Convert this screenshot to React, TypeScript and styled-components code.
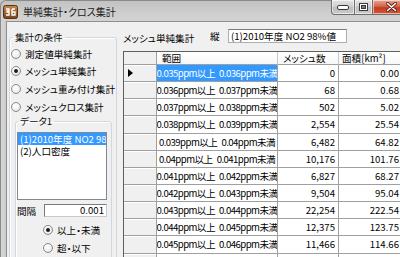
import React from 'react';
import styled, { createGlobalStyle } from 'styled-components';

const FONT = `"Noto Sans CJK JP", "Noto Sans", sans-serif`;

const Global = createGlobalStyle`
  html, body { margin: 0; padding: 0; width: 400px; height: 257px; overflow: hidden; background: #c9c9c9; }
  #root { width: 400px; height: 257px; overflow: hidden; }
  *, *::before, *::after { box-sizing: border-box; }
`;

const Window = styled.div`
  width: 416px;
  height: 290px;
  display: flex;
  flex-direction: column;
  border-top: 1px solid #8a8a8a;
  border-left: 1px solid #8a8a8a;
  border-top-left-radius: 6px;
  background: linear-gradient(180deg, #c2c2c2 0px, #d0d0d0 14px, #d6d6d6 30px, #d4d4d4 100%);
  font-family: ${FONT};
  font-feature-settings: "palt";
  color: #000;
`;

const TitleBar = styled.div`
  height: 20px;
  display: flex;
  align-items: flex-start;
  padding-left: 2px;
  padding-right: 5px;
`;

const AppIcon = styled.svg`
  margin-top: 4px;
  flex: none;
`;

const Title = styled.div`
  margin-left: 5px;
  margin-top: 4px;
  font-size: 10px;
  line-height: 14px;
  color: #1a1a1a;
  white-space: nowrap;
`;

const Caption = styled.div`
  margin-left: auto;
  display: flex;
  height: 15px;
  margin-top: -1px;
`;

const CapBtn = styled.div<{ $w: number; $close?: boolean; $first?: boolean; $last?: boolean }>`
  width: ${(p) => p.$w}px;
  height: 15px;
  display: flex;
  align-items: center;
  justify-content: center;
  border: 1px solid #6e6e6e;
  border-top: none;
  border-left: ${(p) => (p.$first ? '1px solid #6e6e6e' : 'none')};
  border-bottom-left-radius: ${(p) => (p.$first ? '4px' : '0')};
  border-bottom-right-radius: ${(p) => (p.$last ? '4px' : '0')};
  background: ${(p) =>
    p.$close
      ? 'linear-gradient(180deg, #e7a795 0%, #d6654c 45%, #c43b22 55%, #d05a3a 100%)'
      : 'linear-gradient(180deg, #e4e4e4 0%, #cfcfcf 45%, #bdbdbd 55%, #cbcbcb 100%)'};
  box-shadow: inset 0 0 0 1px rgba(255, 255, 255, 0.55);
`;

const Body = styled.div`
  flex: 1;
  display: flex;
  min-height: 0;
`;

const SideFrame = styled.div`
  width: 5px;
  flex: none;
  background: linear-gradient(90deg, #d9d9d9, #cbcbcb);
`;

const Client = styled.div`
  flex: 1;
  display: flex;
  background: #f0f0f0;
  border-top: 1px solid #8f8f8f;
  border-left: 1px solid #8f8f8f;
  overflow: hidden;
  min-width: 0;
  font-size: 9.6px;
  line-height: 12px;
`;

const LeftPanel = styled.div`
  width: 116px;
  flex: none;
  padding: 9px 0 0 2px;
`;

const Group = styled.fieldset<{ $w: number; $ml?: number }>`
  margin: 0 0 0 ${(p) => p.$ml ?? 0}px;
  padding: 0;
  width: ${(p) => p.$w}px;
  min-width: 0;
  height: 320px;
  border: 1px solid #cfd8de;
  border-radius: 3px;
  box-shadow: 1px 1px 0 #ffffff inset;
`;

const Legend = styled.legend<{ $ml: number }>`
  margin-left: ${(p) => p.$ml}px;
  padding: 0 2px;
  font-size: 9.6px;
  line-height: 12px;
  color: #111;
`;

const RadioList = styled.div<{ $pl: number; $mt: number }>`
  display: flex;
  flex-direction: column;
  padding-left: ${(p) => p.$pl}px;
  margin-top: ${(p) => p.$mt}px;
`;

const RadioRow = styled.div`
  height: 17.6px;
  display: flex;
  align-items: center;
  gap: 4px;
  white-space: nowrap;
`;

const RadioCircle = styled.span<{ $on?: boolean }>`
  width: 10px;
  height: 10px;
  flex: none;
  border-radius: 50%;
  border: 1px solid #8a8a8a;
  background: radial-gradient(circle at 40% 35%, #ffffff 0%, #f4f4f4 45%, #d8d8d8 100%);
  display: flex;
  align-items: center;
  justify-content: center;
  &::after {
    content: '';
    display: ${(p) => (p.$on ? 'block' : 'none')};
    width: 4px;
    height: 4px;
    border-radius: 50%;
    background: #1b1b1b;
  }
`;

const ListBox = styled.div`
  margin: 5px 0 0 1px;
  width: 90px;
  height: 68px;
  background: #fff;
  border: 1px solid #828790;
  overflow: hidden;
`;

const ListItem = styled.div<{ $sel?: boolean }>`
  height: 12px;
  line-height: 12px;
  padding-left: 2px;
  white-space: nowrap;
  overflow: hidden;
  background: ${(p) => (p.$sel ? '#3399ff' : 'transparent')};
  color: ${(p) => (p.$sel ? '#fff' : '#000')};
`;

const FieldRow = styled.div`
  margin: 4px 0 0 1px;
  display: flex;
  align-items: center;
  height: 13px;
`;

const FieldLabel = styled.span`
  width: 27px;
  flex: none;
`;

const NumInput = styled.div`
  width: 63px;
  height: 13px;
  background: #fff;
  border: 1px solid #8f8f8f;
  border-color: #7a7a7a #c9c9c9 #c9c9c9 #7a7a7a;
  text-align: right;
  padding-right: 2px;
  line-height: 11px;
`;

const RightPanel = styled.div`
  flex: 1;
  min-width: 0;
  display: flex;
  flex-direction: column;
  padding-top: 7px;
`;

const TopRow = styled.div`
  height: 14px;
  display: flex;
  align-items: center;
`;

const PanelLabel = styled.span<{ $w: number; $mt?: number }>`
  width: ${(p) => p.$w}px;
  flex: none;
  margin-top: ${(p) => p.$mt ?? 0}px;
  white-space: nowrap;
`;

const TextBox = styled.div`
  width: 119px;
  height: 14px;
  background: #fff;
  border: 1px solid #abadb3;
  border-top-color: #7a7a7a;
  padding-left: 2px;
  line-height: 12px;
  white-space: nowrap;
  overflow: hidden;
`;

const Grid = styled.div`
  margin-top: 8px;
  display: grid;
  grid-template-columns: 33px 121px 61px 64px;
  grid-template-rows: 13px repeat(12, 17.15px);
  width: max-content;
  border-top: 1px solid #5f5f5f;
  border-left: 1px solid #5f5f5f;
  background: #fff;
`;

const HeadCell = styled.div<{ $pl?: number }>`
  border-right: 1px solid #c8c8c8;
  border-bottom: 1px solid #a0a0a0;
  background: linear-gradient(180deg, #ffffff, #f7f7f7);
  padding-left: ${(p) => p.$pl ?? 5}px;
  line-height: 12px;
  white-space: nowrap;
  overflow: hidden;
`;

const Corner = styled(HeadCell)`
  background: #f0f0f0;
  border-right: 1px solid #a0a0a0;
`;

const RowHead = styled.div`
  background: #f0f0f0;
  border-right: 1px solid #a0a0a0;
  border-bottom: 1px solid #a0a0a0;
  box-shadow: inset 0 1px 0 #ffffff;
  display: flex;
  align-items: center;
  padding-left: 4px;
`;

const Cell = styled.div<{ $align: 'center' | 'right'; $sel?: boolean }>`
  border-right: 1px solid #a0a0a0;
  border-bottom: 1px solid #a0a0a0;
  display: flex;
  align-items: center;
  justify-content: ${(p) => (p.$align === 'right' ? 'flex-end' : 'center')};
  padding: ${(p) => (p.$align === 'right' ? '0 3px 0 0' : '0 1px')};
  letter-spacing: ${(p) => (p.$align === 'center' ? '-0.55px' : '0')};
  word-spacing: ${(p) => (p.$align === 'center' ? '2.5px' : '0')};
  white-space: nowrap;
  overflow: hidden;
  background: ${(p) => (p.$sel ? '#3399ff' : '#fff')};
  color: ${(p) => (p.$sel ? '#fff' : '#000')};
`;

const rows: [string, string, string][] = [
  ['0.035ppm以上 0.036ppm未満', '0', '0.00'],
  ['0.036ppm以上 0.037ppm未満', '68', '0.68'],
  ['0.037ppm以上 0.038ppm未満', '502', '5.02'],
  ['0.038ppm以上 0.039ppm未満', '2,554', '25.54'],
  ['0.039ppm以上 0.04ppm未満', '6,482', '64.82'],
  ['0.04ppm以上 0.041ppm未満', '10,176', '101.76'],
  ['0.041ppm以上 0.042ppm未満', '6,827', '68.27'],
  ['0.042ppm以上 0.043ppm未満', '9,504', '95.04'],
  ['0.043ppm以上 0.044ppm未満', '22,254', '222.54'],
  ['0.044ppm以上 0.045ppm未満', '12,375', '123.75'],
  ['0.045ppm以上 0.046ppm未満', '11,466', '114.66'],
  ['0.046ppm以上 0.047ppm未満', '4,515', '45.15'],
];

const Radio = ({ label, on }: { label: string; on?: boolean }) => (
  <RadioRow>
    <RadioCircle $on={on} />
    <span>{label}</span>
  </RadioRow>
);

export default function App() {
  return (
    <>
      <Global />
      <Window>
        <TitleBar>
          <AppIcon width="15" height="14" viewBox="0 0 15 14">
            <defs>
              <linearGradient id="ig" x1="0" y1="0" x2="0" y2="1">
                <stop offset="0" stopColor="#c98a4a" />
                <stop offset="1" stopColor="#7a4418" />
              </linearGradient>
            </defs>
            <rect x="0.5" y="0.5" width="14" height="13" rx="2" fill="url(#ig)" stroke="#5a3210" />
            <path d="M3 4h3v2H4v1h2v3H3" fill="none" stroke="#fff" strokeWidth="1.3" />
            <path d="M9 4h3M9 4v6h3V7H9" fill="none" stroke="#fff" strokeWidth="1.3" />
          </AppIcon>
          <Title>単純集計・クロス集計</Title>
          <Caption>
            <CapBtn $w={24} $first>
              <svg width="12" height="5" viewBox="0 0 12 5">
                <rect x="0.5" y="0.5" width="11" height="4" rx="1.5" fill="#fff" stroke="#3a3a3a" />
              </svg>
            </CapBtn>
            <CapBtn $w={18}>
              <svg width="9" height="8" viewBox="0 0 9 8">
                <rect x="0.5" y="0.5" width="8" height="7" fill="#fff" stroke="#3a3a3a" />
                <rect x="2.5" y="2.5" width="4" height="3" fill="#7a7a7a" stroke="#3a3a3a" />
              </svg>
            </CapBtn>
            <CapBtn $w={38} $close $last>
              <svg width="11" height="10" viewBox="0 0 11 10">
                <path d="M1.5 1.5l8 7M9.5 1.5l-8 7" stroke="#5a1a10" strokeWidth="3" strokeLinecap="round" />
                <path d="M1.5 1.5l8 7M9.5 1.5l-8 7" stroke="#fff" strokeWidth="1.6" strokeLinecap="round" />
              </svg>
            </CapBtn>
          </Caption>
        </TitleBar>
        <Body>
          <SideFrame />
          <Client>
            <LeftPanel>
              <Group $w={108}>
                <Legend $ml={3}>集計の条件</Legend>
                <RadioList $pl={1} $mt={2}>
                  <Radio label="測定値単純集計" />
                  <Radio label="メッシュ単純集計" on />
                  <Radio label="メッシュ重み付け集計" />
                  <Radio label="メッシュクロス集計" />
                </RadioList>
                <Group $w={97} $ml={5}>
                  <Legend $ml={2}>データ1</Legend>
                  <ListBox>
                    <ListItem $sel>(1)2010年度 NO2 98%値</ListItem>
                    <ListItem>(2)人口密度</ListItem>
                  </ListBox>
                  <FieldRow>
                    <FieldLabel>間隔</FieldLabel>
                    <NumInput>0.001</NumInput>
                  </FieldRow>
                  <RadioList $pl={27} $mt={4}>
                    <Radio label="以上・未満" on />
                    <Radio label="超・以下" />
                  </RadioList>
                </Group>
              </Group>
            </LeftPanel>
            <RightPanel>
              <TopRow>
                <PanelLabel $w={87} $mt={4}>メッシュ単純集計</PanelLabel>
                <PanelLabel $w={18}>縦</PanelLabel>
                <TextBox>(1)2010年度 NO2 98%値</TextBox>
              </TopRow>
              <Grid>
                <Corner />
                <HeadCell>範囲</HeadCell>
                <HeadCell>メッシュ数</HeadCell>
                <HeadCell $pl={3}>面積[km²]</HeadCell>
                {rows.map((r, i) => (
                  <React.Fragment key={i}>
                    <RowHead>
                      {i === 0 && (
                        <svg width="5" height="8" viewBox="0 0 5 8">
                          <path d="M0 0L5 4L0 8Z" fill="#000" />
                        </svg>
                      )}
                    </RowHead>
                    <Cell $align="center" $sel={i === 0}>{r[0]}</Cell>
                    <Cell $align="right">{r[1]}</Cell>
                    <Cell $align="right">{r[2]}</Cell>
                  </React.Fragment>
                ))}
              </Grid>
            </RightPanel>
          </Client>
        </Body>
      </Window>
    </>
  );
}
